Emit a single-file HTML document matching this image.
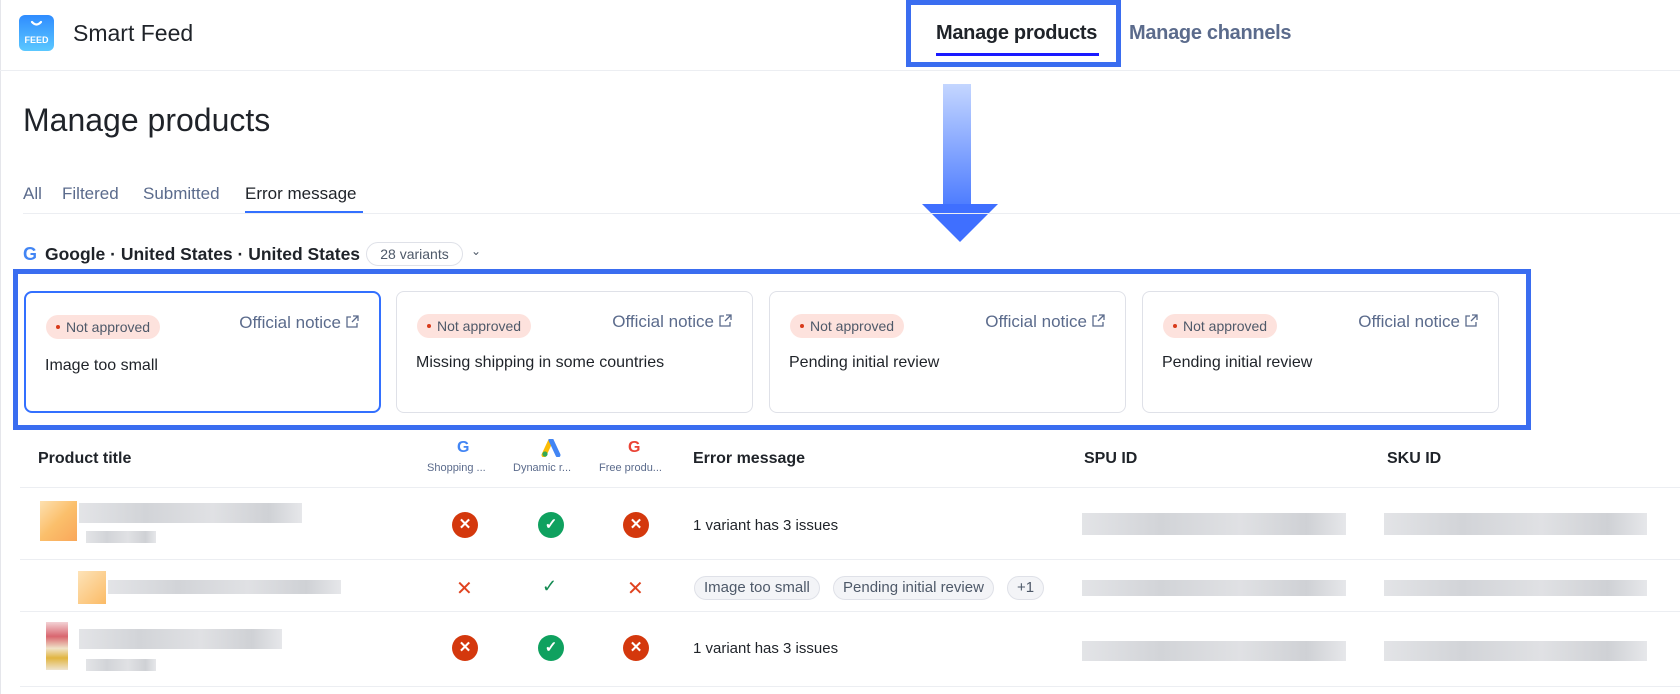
<!DOCTYPE html>
<html><head><meta charset="utf-8"><style>
*{margin:0;padding:0;box-sizing:border-box}
body{width:1680px;height:694px;background:#fff;font-family:"Liberation Sans",Arial,sans-serif;color:#1f2329;position:relative;overflow:hidden}
.a{position:absolute;white-space:nowrap}
.card{position:absolute;top:291px;width:357px;height:122px;border:1px solid #dfe1e8;border-radius:8px;background:#fff}
.card.sel{border:2px solid #3370ff}
.badge{position:absolute;left:20px;top:22px;height:24px;padding:0 10px 0 20px;border-radius:12px;background:#fde2dd;font-size:14px;line-height:24px;color:#4e5969}
.badge:before{content:"";position:absolute;left:10px;top:10px;width:4px;height:4px;border-radius:50%;background:#d83a1a}
.notice{position:absolute;right:20px;top:20px;font-size:17px;color:#5b6b8c}
.notice svg{vertical-align:-1px;margin-left:4px}
.ttl{position:absolute;left:19px;top:62px;font-size:16px;color:#1f2329}
.blur{position:absolute;background:linear-gradient(90deg,#e3e4e7,#d2d4d8 30%,#e0e1e4 60%,#cfd1d5 85%,#e6e7ea)}
.ic{position:absolute;width:26px;height:26px;border-radius:50%;color:#fff;text-align:center;font-size:15px;line-height:26px;font-weight:bold}
.r{background:#d4380d}.g{background:#0fa15f}
.pill{position:absolute;height:24px;border:1px solid #dfe1e8;border-radius:12px;background:#f3f4f7;font-size:15px;line-height:22px;padding:0 9px;color:#4e5969}
.hl{position:absolute;height:1px;background:#eceef2}
</style></head><body>
<div class="a" style="left:0;top:0;width:1px;height:694px;background:#e5e6eb"></div>
<div class="a" style="left:19px;top:15px;width:35px;height:36px;border-radius:6px;background:linear-gradient(180deg,#2f8cff,#5bc8ff)"></div>
<svg class="a" style="left:19px;top:15px" width="35" height="36"><path d="M13 7 Q17.5 12 22 7" stroke="#fff" stroke-width="2.2" fill="none" stroke-linecap="round"/><text x="17.5" y="28" font-size="9" font-weight="bold" fill="#fff" text-anchor="middle" font-family="Liberation Sans">FEED</text></svg>
<div class="a" style="left:73px;top:20px;font-size:23px;color:#1f2329">Smart Feed</div>
<div class="a" style="left:906px;top:0;width:215px;height:67px;border:5px solid #3a6df0"></div>
<div class="a" style="left:936px;top:22px;font-size:20px;font-weight:bold;color:#1f2329;letter-spacing:-0.3px">Manage products</div>
<div class="a" style="left:936px;top:53px;width:163px;height:3px;background:#1a1aff"></div>
<div class="a" style="left:1129px;top:22px;font-size:20px;font-weight:bold;color:#5b6b8c;letter-spacing:-0.3px">Manage channels</div>
<div class="hl" style="left:0;top:70px;width:1680px"></div>
<div class="a" style="left:943px;top:84px;width:28px;height:122px;background:linear-gradient(180deg,#c4d6ff,#4d7cff)"></div>
<svg class="a" style="left:922px;top:204px" width="76" height="38"><polygon points="0,0 76,0 38,38" fill="#3f6fff"/></svg>
<div class="a" style="left:23px;top:102px;font-size:32px;color:#1f2329">Manage products</div>
<div class="a" style="left:23px;top:184px;font-size:17px;color:#5b6b8c">All</div>
<div class="a" style="left:62px;top:184px;font-size:17px;color:#5b6b8c">Filtered</div>
<div class="a" style="left:143px;top:184px;font-size:17px;color:#5b6b8c">Submitted</div>
<div class="a" style="left:245px;top:184px;font-size:17px;color:#1f2329">Error message</div>
<div class="hl" style="left:23px;top:213px;width:1657px"></div>
<div class="a" style="left:245px;top:211px;width:118px;height:2px;background:#3370ff"></div>
<div class="a" style="left:23px;top:244px;font-size:18px;font-weight:bold;color:#4285f4">G</div>
<div class="a" style="left:45px;top:244px;font-size:17.5px;font-weight:bold;color:#1f2329">Google · United States · United States</div>
<div class="a" style="left:366px;top:242px;width:97px;height:24px;border:1px solid #dfe1e8;border-radius:12px;font-size:14px;line-height:22px;text-align:center;color:#4e5969">28 variants</div>
<div class="a" style="left:471px;top:244px;font-size:12px;color:#4e5969">⌄</div>
<div class="a" style="left:13px;top:269px;width:1518px;height:161px;border:5px solid #3a6df0"></div>
<div class="card sel" style="left:24px"><div class="badge">Not approved</div><div class="notice">Official notice<svg width="14" height="14" viewBox="0 0 14 14"><path d="M6 2H2v10h10V8M8 1h5v5M13 1L7 7" stroke="#5b6b8c" stroke-width="1.3" fill="none"/></svg></div><div class="ttl" style="top:64px">Image too small</div></div>
<div class="card" style="left:396px"><div class="badge">Not approved</div><div class="notice">Official notice<svg width="14" height="14" viewBox="0 0 14 14"><path d="M6 2H2v10h10V8M8 1h5v5M13 1L7 7" stroke="#5b6b8c" stroke-width="1.3" fill="none"/></svg></div><div class="ttl">Missing shipping in some countries</div></div>
<div class="card" style="left:769px"><div class="badge">Not approved</div><div class="notice">Official notice<svg width="14" height="14" viewBox="0 0 14 14"><path d="M6 2H2v10h10V8M8 1h5v5M13 1L7 7" stroke="#5b6b8c" stroke-width="1.3" fill="none"/></svg></div><div class="ttl">Pending initial review</div></div>
<div class="card" style="left:1142px"><div class="badge">Not approved</div><div class="notice">Official notice<svg width="14" height="14" viewBox="0 0 14 14"><path d="M6 2H2v10h10V8M8 1h5v5M13 1L7 7" stroke="#5b6b8c" stroke-width="1.3" fill="none"/></svg></div><div class="ttl">Pending initial review</div></div>
<div class="a" style="left:38px;top:450px;font-size:16px;font-weight:bold;color:#1f2329">Product title</div>
<div class="a" style="left:457px;top:439px;font-size:16px;font-weight:bold;color:#4285f4">G</div>
<svg class="a" style="left:541px;top:439px" width="20" height="18"><path d="M10 1 L3 16" stroke="#fbbc04" stroke-width="5" stroke-linecap="round"/><path d="M10 1 L17 16" stroke="#4285f4" stroke-width="5" stroke-linecap="round"/><circle cx="4" cy="15" r="2.6" fill="#34a853"/></svg>
<div class="a" style="left:628px;top:439px;font-size:16px;font-weight:bold;color:#ea4335">G</div>
<div class="a" style="left:427px;top:462px;font-size:11px;color:#5b6b8c">Shopping ...</div>
<div class="a" style="left:513px;top:462px;font-size:11px;color:#5b6b8c">Dynamic r...</div>
<div class="a" style="left:599px;top:462px;font-size:11px;color:#5b6b8c">Free produ...</div>
<div class="a" style="left:693px;top:450px;font-size:16px;font-weight:bold;color:#1f2329">Error message</div>
<div class="a" style="left:1084px;top:450px;font-size:16px;font-weight:bold;color:#1f2329">SPU ID</div>
<div class="a" style="left:1387px;top:450px;font-size:16px;font-weight:bold;color:#1f2329">SKU ID</div>
<div class="hl" style="left:20px;top:487px;width:1660px"></div>
<div class="a" style="left:40px;top:501px;width:37px;height:40px;background:linear-gradient(135deg,#fde0b0,#fbbf6b 50%,#f9a75a)"></div>
<div class="blur" style="left:79px;top:503px;width:223px;height:20px"></div>
<div class="blur" style="left:86px;top:531px;width:70px;height:12px"></div>
<div class="ic r" style="left:452px;top:512px">✕</div>
<div class="ic g" style="left:538px;top:512px">✓</div>
<div class="ic r" style="left:623px;top:512px">✕</div>
<div class="a" style="left:693px;top:517px;font-size:15px;color:#1f2329">1 variant has 3 issues</div>
<div class="blur" style="left:1082px;top:513px;width:264px;height:22px"></div>
<div class="blur" style="left:1384px;top:513px;width:263px;height:22px"></div>
<div class="hl" style="left:20px;top:559px;width:1660px"></div>
<div class="a" style="left:78px;top:571px;width:28px;height:33px;background:linear-gradient(135deg,#fde3b8,#fbbb66)"></div>
<div class="blur" style="left:108px;top:580px;width:233px;height:14px"></div>
<div class="a" style="left:456px;top:576px;font-size:20px;color:#e0431f">✕</div>
<div class="a" style="left:542px;top:576px;font-size:18px;color:#138a52">✓</div>
<div class="a" style="left:627px;top:576px;font-size:20px;color:#e0431f">✕</div>
<div class="pill" style="left:694px;top:576px">Image too small</div>
<div class="pill" style="left:833px;top:576px">Pending initial review</div>
<div class="pill" style="left:1007px;top:576px">+1</div>
<div class="blur" style="left:1082px;top:580px;width:264px;height:16px"></div>
<div class="blur" style="left:1384px;top:580px;width:263px;height:16px"></div>
<div class="hl" style="left:20px;top:611px;width:1660px"></div>
<div class="a" style="left:46px;top:622px;width:22px;height:48px;background:linear-gradient(180deg,#f3d2d5,#d9666f 30%,#f0e3c8 55%,#e1b540 75%,#efe4cf)"></div>
<div class="blur" style="left:79px;top:629px;width:203px;height:20px"></div>
<div class="blur" style="left:86px;top:659px;width:70px;height:12px"></div>
<div class="ic r" style="left:452px;top:635px">✕</div>
<div class="ic g" style="left:538px;top:635px">✓</div>
<div class="ic r" style="left:623px;top:635px">✕</div>
<div class="a" style="left:693px;top:640px;font-size:15px;color:#1f2329">1 variant has 3 issues</div>
<div class="blur" style="left:1082px;top:641px;width:264px;height:20px"></div>
<div class="blur" style="left:1384px;top:641px;width:263px;height:20px"></div>
<div class="hl" style="left:20px;top:686px;width:1660px"></div>
</body></html>
